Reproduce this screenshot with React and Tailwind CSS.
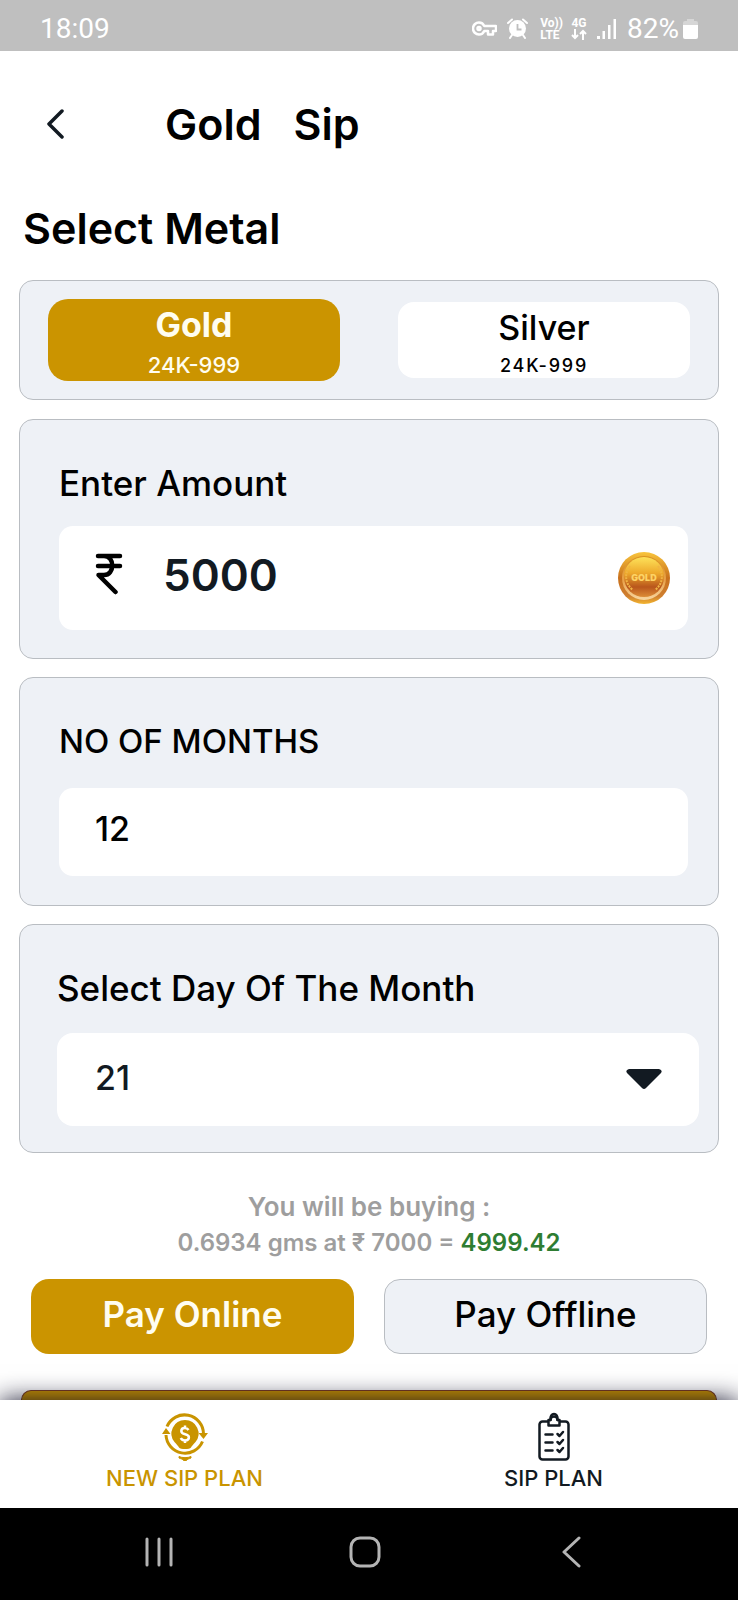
import React, { useState } from "react";

const DAYS = Array.from({ length: 28 }, (_, i) => i + 1);

function KeyIcon() {
  return (
    <svg width="25" height="16" viewBox="0 0 25 16" fill="none" stroke="#fff" strokeWidth="2.500" strokeLinejoin="round">
      <path d="M7 1.500a6 6 0 1 0 0 12c2.600 0 4.400-1.400 5.300-3.500H16v3.500h5V10h3V5H12.300C11.400 2.900 9.600 1.500 7 1.500z" />
      <circle cx="7" cy="7.500" r="1.500" />
    </svg>
  );
}

function AlarmIcon() {
  return (
    <svg width="21" height="21" viewBox="0 0 21 21" fill="none">
      <path d="M1 5l4-3.500M20 5l-4-3.500M5 17l-2 3M16 17l2 3" stroke="#fff" strokeWidth="2" strokeLinecap="round" />
      <circle cx="10.500" cy="10.500" r="8.500" fill="#fff" />
      <path d="M10.500 6v5.500h4" stroke="#bfbfbf" strokeWidth="1.800" />
    </svg>
  );
}

function SignalIcon() {
  return (
    <svg width="20" height="20" viewBox="0 0 20 20" fill="#fff">
      <rect x="0" y="17" width="3" height="3" />
      <rect x="5.500" y="12" width="2.500" height="8" />
      <rect x="11" y="6" width="2.500" height="14" />
      <rect x="16.500" y="0" width="2.500" height="20" />
    </svg>
  );
}

function BatteryIcon() {
  return (
    <svg width="15" height="20" viewBox="0 0 15 20">
      <path d="M4 0h7v2h2a2 2 0 0 1 2 2v3H0V4a2 2 0 0 1 2-2h2z" fill="#d6d6d6" />
      <path d="M0 6h15v12a2 2 0 0 1-2 2H2a2 2 0 0 1-2-2z" fill="#fff" />
    </svg>
  );
}

function RupeeIcon() {
  return (
    <svg width="28" height="42" viewBox="0 0 28 42" fill="none" stroke="#000" strokeWidth="4.500" strokeLinecap="round" strokeLinejoin="round">
      <path d="M3 3h22M3 13h22M3 3h6c11 0 11 19 0 19H3.500L20.500 39" />
    </svg>
  );
}

function GoldCoin() {
  return (
    <svg width="52" height="52" viewBox="0 0 52 52" aria-label="Gold coin">
      <defs>
        <linearGradient id="rim" x1="0" y1="0" x2="0" y2="1">
          <stop offset="0" stopColor="#f9c53c" />
          <stop offset="0.500" stopColor="#c8701c" />
          <stop offset="0.850" stopColor="#cf7f30" />
          <stop offset="1" stopColor="#f3b52f" />
        </linearGradient>
        <linearGradient id="ring" x1="0" y1="0" x2="0" y2="1">
          <stop offset="0" stopColor="#d9901f" />
          <stop offset="0.550" stopColor="#e8a24a" />
          <stop offset="1" stopColor="#f8d6a0" />
        </linearGradient>
        <linearGradient id="face" x1="0" y1="0" x2="0" y2="1">
          <stop offset="0" stopColor="#fde25a" />
          <stop offset="0.400" stopColor="#eeaa2c" />
          <stop offset="0.750" stopColor="#b9561c" />
          <stop offset="1" stopColor="#dc8c36" />
        </linearGradient>
      </defs>
      <circle cx="26" cy="26" r="26" fill="url(#rim)" />
      <circle cx="26" cy="26" r="22" fill="url(#ring)" />
      <circle cx="26" cy="25" r="20" fill="url(#face)" />
      <path d="M12 14c-6 8-5 18 3 24M40 14c6 8 5 18-3 24" fill="none" stroke="#f0b444" strokeWidth="2" strokeDasharray="2 1" />
      <text x="26" y="29" textAnchor="middle" fontSize="9" fontWeight="900" fill="#fdd264" fontFamily="Inter, sans-serif">GOLD</text>
    </svg>
  );
}

function NewPlanIcon() {
  return (
    <svg width="46" height="50" viewBox="0 0 46 50" fill="none">
      <path d="M5 14.500A19 19 0 0 1 41.500 22" stroke="#c99400" strokeWidth="3" />
      <path d="M4 23a19 19 0 0 0 36.500 6.500" stroke="#c99400" strokeWidth="3" />
      <path d="M36.500 21H46l-4.500 6z" fill="#c99400" />
      <path d="M0 22h8.500L4 16z" fill="#c99400" />
      <path d="M23 8a13.500 13.500 0 0 0-10.500 22c2.500 2.500 3.500 4 4.500 5.500 1.500 2 10.500 2 12 0 1-1.500 2-3 4.500-5.500A13.500 13.500 0 0 0 23 8z" fill="#c99400" />
      <path d="M17 44.500c3 1.500 9 1.500 12 0v1.500c-2 1-4 1-4.500 2.500h-3c-.5-1.500-2.500-1.500-4.500-2.500z" fill="#c99400" stroke="#c99400" />
      <path d="M26.500 18c-1-1.500-2.300-2-3.700-2-2 0-3.500 1.200-3.500 3 0 4.500 7.600 2 7.600 6.300 0 2-1.800 3.200-3.900 3.200-1.900 0-3.400-.9-4.200-2.500M23 13.500V16M23 28.500V31" stroke="#fff" strokeWidth="2.500" />
    </svg>
  );
}

function PlanIcon() {
  return (
    <svg width="32" height="50" viewBox="0 0 32 50" fill="none" stroke="#121a22" strokeWidth="2.500" strokeLinecap="round" strokeLinejoin="round">
      <path d="M10 9.500H4.500a3 3 0 0 0-3 3v32a3 3 0 0 0 3 3h23a3 3 0 0 0 3-3v-32a3 3 0 0 0-3-3H22" />
      <path d="M10.500 8h2a3.500 3.500 0 0 1 7 0h2v5.500h-11z" fill="#fff" />
      <path d="M12.500 8C11.500 0 20.500 0 19.500 8" />
      <path d="M7.500 22.500h7M7.500 30.500h7M7.500 38.500h7M19.500 22l2 2 3.500-4M19.500 30l2 2 3.500-4M19.500 38l2 2 3.500-4" />
    </svg>
  );
}

function Panel({ children, className }) {
  return (
    <section className={`rounded-[14px] border border-[#b9bdc2] bg-[#eef1f6] ${className}`}>
      {children}
    </section>
  );
}

export default function App() {
  const [metal, setMetal] = useState("gold");
  const [amount, setAmount] = useState("5000");
  const [months, setMonths] = useState("12");
  const [day, setDay] = useState(21);

  return (
    <div className="flex min-h-screen flex-col bg-white font-['Inter',sans-serif] text-black">
      <header className="flex h-[51px] items-center justify-between bg-[#bfbfbf] pt-1.5 pr-10 pl-10 font-['Roboto',sans-serif] text-[28px] text-white">
        <span>18:09</span>
        <div className="flex items-center">
          <KeyIcon />
          <span className="ml-2.5"><AlarmIcon /></span>
          <span className="ml-3 flex flex-col text-[12px] leading-3 font-bold">
            <span>Vo))</span>
            <span>LTE</span>
          </span>
          <span className="ml-2 flex flex-col items-center text-[12px] leading-3 font-bold">
            <span>4G</span>
            <svg width="16" height="11" viewBox="0 0 16 11" fill="none" stroke="#fff" strokeWidth="2">
              <path d="M4 0v9M1 6l3 3 3-3M12 11V2M9 5l3-3 3 3" />
            </svg>
          </span>
          <span className="ml-2.5"><SignalIcon /></span>
          <span className="ml-2.5">82%</span>
          <span className="ml-1"><BatteryIcon /></span>
        </div>
      </header>

      <main className="flex flex-1 flex-col px-[19px]">
        <div className="flex h-[146px] items-center pl-7">
          <button aria-label="Back" className="flex w-[118px]">
            <svg width="18" height="30" viewBox="0 0 18 30" fill="none" stroke="#121a22" strokeWidth="3.500" strokeLinecap="round" strokeLinejoin="round">
              <path d="M15 2L2 15l13 13" />
            </svg>
          </button>
          <h1 className="flex gap-8 text-[43px] font-semibold">
            <span>Gold</span>
            <span>Sip</span>
          </h1>
        </div>

        <h2 className="h-[83px] pl-1 text-[43px] leading-[62px] font-semibold">Select Metal</h2>

        <Panel className="flex h-[120px] items-center justify-between px-7">
          <button
            onClick={() => setMetal("gold")}
            aria-pressed={metal === "gold"}
            className="flex h-[82px] w-[292px] flex-col items-center rounded-[20px] bg-[#cb9400] text-[#fffdf0]"
          >
            <span className="text-[34px] leading-[52px] font-bold">Gold</span>
            <span className="text-[22px] leading-[28px] font-medium">24K-999</span>
          </button>
          <button
            onClick={() => setMetal("silver")}
            aria-pressed={metal === "silver"}
            className="flex h-[76px] w-[292px] flex-col items-center rounded-[16px] bg-white"
          >
            <span className="text-[34px] leading-[52px] font-medium">Silver</span>
            <span className="text-[18px] leading-[24px] font-medium tracking-widest">24K-999</span>
          </button>
        </Panel>

        <Panel className="mt-[19px] flex h-[240px] flex-col pt-9 pr-[30px] pl-[39px]">
          <label htmlFor="amount" className="h-[70px] text-[35px] leading-[54px] font-medium">Enter Amount</label>
          <div className="flex h-[104px] items-center rounded-[14px] bg-white pr-[18px] pl-9">
            <span className="pb-2"><RupeeIcon /></span>
            <input
              id="amount"
              value={amount}
              onChange={(e) => setAmount(e.target.value)}
              className="ml-10 w-0 flex-1 pb-1.5 text-[44px] font-semibold text-[#121a22] outline-none"
            />
            <GoldCoin />
          </div>
        </Panel>

        <Panel className="mt-[18px] flex h-[229px] flex-col pt-9 pr-[30px] pl-[39px]">
          <label htmlFor="months" className="h-[74px] text-[33px] leading-[54px] font-medium">NO OF MONTHS</label>
          <input
            id="months"
            value={months}
            onChange={(e) => setMonths(e.target.value)}
            className="h-[88px] rounded-[14px] bg-white pb-2 pl-9 text-[34px] font-medium outline-none"
          />
        </Panel>

        <Panel className="mt-[18px] flex h-[229px] flex-col pt-9 pr-[19px] pl-[37px]">
          <label htmlFor="day" className="h-[72px] text-[35px] leading-[54px] font-medium">Select Day Of The Month</label>
          <div className="relative flex">
            <select
              id="day"
              value={day}
              onChange={(e) => setDay(Number(e.target.value))}
              className="h-[93px] w-full appearance-none rounded-[16px] bg-white pb-1 pl-[38px] text-[34px] font-medium text-[#121a22] outline-none"
            >
              {DAYS.map((d) => (
                <option key={d} value={d}>{d}</option>
              ))}
            </select>
            <svg className="pointer-events-none absolute top-9 right-[37px]" width="36" height="21" viewBox="0 0 36 21" fill="#121a22">
              <path d="M3 0h30q4 1 2 4L20 19q-2 2-4 0L1 4Q-1 1 3 0z" />
            </svg>
          </div>
        </Panel>

        <div className="mt-9 flex flex-col items-center font-semibold text-[#9e9e9e]">
          <p className="text-[26px] leading-9">You will be buying :</p>
          <p className="text-[24px] leading-9">
            0.6934 gms at ₹ 7000 = <span className="text-[#2e7d32]">4999.42</span>
          </p>
        </div>

        <div className="mt-[18px] grid grid-cols-2 gap-[30px] px-3">
          <button className="h-[75px] rounded-[18px] bg-[#cb9400] pb-1 text-[35px] font-semibold text-[#fffdf0]">Pay Online</button>
          <button className="h-[75px] rounded-[16px] border border-[#b9bdc2] bg-[#eef1f6] pb-1 text-[35px] font-medium">Pay Offline</button>
        </div>

        <div className="mx-0.5 mt-9 h-[10px] rounded-t-[14px] border-x border-t border-[#7a3b20] bg-[#cb9400]" />
      </main>

      <nav className="relative flex h-[108px] bg-white pt-3 text-[22px] leading-8 font-medium shadow-[0_0_24px_rgba(10,10,35,0.95)]">
        <a href="#new" className="flex flex-1 flex-col items-center text-[#c99400]">
          <NewPlanIcon />
          <span>NEW SIP PLAN</span>
        </a>
        <a href="#plans" className="flex flex-1 flex-col items-center text-[#121a22]">
          <PlanIcon />
          <span>SIP PLAN</span>
        </a>
      </nav>

      <footer className="relative grid h-[92px] grid-cols-3 items-center justify-items-center bg-black pr-16 pb-1 pl-14">
        <button aria-label="Recent apps">
          <svg width="28" height="30" viewBox="0 0 28 30" stroke="#b4b4b4" strokeWidth="3" strokeLinecap="round">
            <path d="M2 2v26M14 2v26M26 2v26" />
          </svg>
        </button>
        <button aria-label="Home">
          <svg width="32" height="32" viewBox="0 0 32 32" fill="none" stroke="#b4b4b4" strokeWidth="3">
            <rect x="2" y="2" width="28" height="28" rx="9" />
          </svg>
        </button>
        <button aria-label="System back">
          <svg width="20" height="32" viewBox="0 0 20 32" fill="none" stroke="#b4b4b4" strokeWidth="3" strokeLinecap="round" strokeLinejoin="round">
            <path d="M18 2L3 16l15 14" />
          </svg>
        </button>
      </footer>
    </div>
  );
}
